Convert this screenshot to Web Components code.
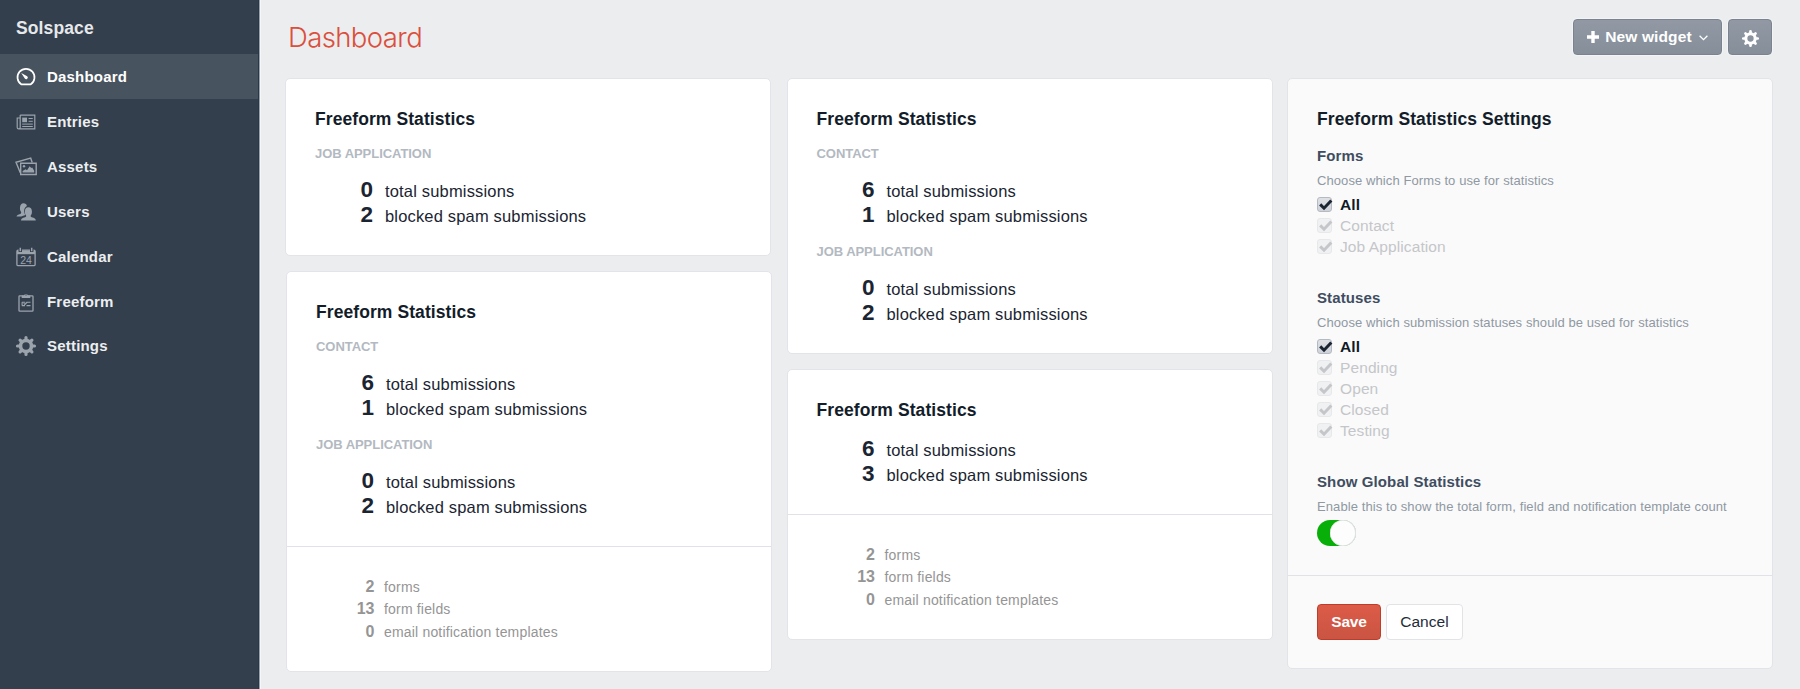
<!DOCTYPE html>
<html lang="en">
<head>
<meta charset="utf-8">
<title>Dashboard</title>
<style>
  html, body { margin: 0; height: 100%; }
  body { background: #ebedef; font-family: "Liberation Sans", Arial, sans-serif; color: #1b2532; overflow: hidden; }
</style>
</head>
<body>
<cp-app></cp-app>
<script>
const define = (name, html, after) => {
  const tpl = document.createElement('template');
  tpl.innerHTML = html;
  customElements.define(name, class extends HTMLElement {
    constructor() {
      super();
      this.attachShadow({ mode: 'open' }).append(tpl.content.cloneNode(true));
    }
    connectedCallback() { if (after) after(this, this.shadowRoot); }
  });
};

const GEAR = '<g fill="none" stroke="currentColor"><circle cx="10" cy="10" r="5.500" stroke-width="3.600"/><path d="M10 1.500v2.500M10 16v2.500M1.500 10H4M16 10h2.500M4.100 4.100l1.500 1.500M14.400 14.400l1.500 1.500M4.100 15.900l1.500-1.500M14.400 5.600l1.500-1.500" stroke-width="3.200" stroke-linecap="round"/></g>';

const ICONS = {
  gauge: '<path d="M5.200 17.300A8.500 8.500 0 1 1 14.800 17.300Z" fill="none" stroke="currentColor" stroke-width="1.700" stroke-linejoin="round"/><path d="M5.200 5.900l6 3.300a1.700 1.700 0 1 1-2.400 2.400z" fill="currentColor"/>',
  news: '<g fill="none" stroke="currentColor" stroke-width="1.200"><path d="M4.200 3.100h14.600v13.800H2.700a1.500 1.500 0 0 1-1.500-1.500V6h3M4.200 3.100v12.300a1.400 1.400 0 0 1-1.400 1.400"/><path d="M12.600 6.500h4.200M12.600 9.300h4.200M6.200 12.100h10.600M6.200 14.500h10.600" stroke-width="1"/></g><path d="M6.200 5.600h4.800v4.600H6.200z" fill="currentColor"/>',
  photos: '<g fill="none" stroke="currentColor" stroke-width="1.400"><path d="M4.700 6.300h15.500v11.200H4.700z"/><path d="M4.300 15.800L0 5.300 14.700 1.200l1.500 4.200"/></g><circle cx="8" cy="9.300" r="1.200" fill="currentColor"/><path d="M6.600 15.600v-1.500l3-1.800 1.400 1 2.700-4 1.500 1.800 1-.5 2 3.200v1.800z" fill="currentColor"/>',
  users: '<path d="M.5 14.600c.2-1.700 1.600-2.100 3.700-2.700 1.100-.4 1.200-1.500.6-2.500-.8-1.100-.9-2.200-.8-3.900C4.100 2.800 5.400 1.200 7.500 1.200c1.900 0 3.100.9 3.400 2.700-1.900 1-2.900 2.900-2.700 5.500.1 1.300.4 2.400 1.100 3.500-1.300.8-3 .9-4.200 1.700z" fill="currentColor"/><path d="M5 18.600c.1-1.900 1.200-2.500 4.100-3.300 1.300-.4 1.300-1.300.7-2.200-.7-1-1-2-.9-3.900.1-2.500 1.300-4 3.500-4s3.400 1.500 3.500 4c.1 1.900-.2 2.900-.9 3.900-.6.900-.6 1.800.7 2.200 2.900.8 4 1.400 4.100 3.300z" fill="currentColor"/>',
  calendar: '<rect x=".9" y="3.200" width="18.200" height="15.400" rx="1.200" fill="none" stroke="currentColor" stroke-width="1.300"/><path d="M1 3.500h18v3.700H1z" fill="currentColor"/><path d="M4.300.9v4M15.700.9v4" stroke="#333f4d" stroke-width="3.400"/><path d="M4.300.8v3.400M15.700.8v3.400" stroke="currentColor" stroke-width="1.500"/><text x="10.100" y="16.700" font-size="10.500" text-anchor="middle" font-family="Liberation Sans" fill="currentColor">24</text>',
  clipboard: '<rect x="3" y="3.800" width="14" height="15.400" rx=".8" fill="none" stroke="currentColor" stroke-width="1.300"/><path d="M5.700 6V3.500h2.200a2.200 2.200 0 0 1 4.200 0h2.200V6z" fill="currentColor"/><circle cx="10" cy="2.900" r=".7" fill="#333f4d"/><path d="M5.800 10.200h3.400M11.300 10.200h3.200M5.800 13.600h3.200M10.500 13.600h4M6.100 10.200v3.400M7.700 11.400l1.200 1.100 2.400-2.500" stroke="currentColor" stroke-width="1.100" fill="none"/>',
  gear: GEAR
};

define('cp-icon', `
  <style>:host{display:block;width:var(--size,20px);height:var(--size,20px);flex:none} svg{display:block;width:100%;height:100%;overflow:visible}</style>
  <svg viewBox="0 0 20 20"></svg>`,
  (el, root) => { root.querySelector('svg').innerHTML = ICONS[el.getAttribute('name')]; });

define('nav-item', `
  <style>
    :host{display:flex;align-items:center;height:44.850px;padding:2px 0 0 16px;gap:11px;color:#9ba3ad;box-sizing:border-box}
    :host([active]){background:#47535f;color:#fff}
    span{font:bold 15px/20px "Liberation Sans",Arial,sans-serif;color:#eceef0;letter-spacing:.2px}
    :host([active]) span{color:#fff}
  </style>
  <cp-icon></cp-icon><span><slot></slot></span>`,
  (el, root) => {
    const old = root.querySelector('cp-icon');
    const icon = document.createElement('cp-icon');
    icon.setAttribute('name', el.getAttribute('icon'));
    old.replaceWith(icon);
  });

define('side-bar', `
  <style>
    :host{display:block;width:259px;margin-right:1px;flex:none;background:#333f4d;border-right:1px solid #29374a;box-sizing:border-box;box-shadow:1px 0 0 #9aa2ac,2px 0 0 #f6f7f8}
    h1{margin:0;height:54px;box-sizing:border-box;padding:16px 0 0 16px;font:bold 17.500px/24px "Liberation Sans",Arial,sans-serif;letter-spacing:.12px;color:#e6e8ea}
  </style>
  <h1>Solspace</h1>
  <nav>
    <nav-item icon="gauge" active>Dashboard</nav-item>
    <nav-item icon="news">Entries</nav-item>
    <nav-item icon="photos">Assets</nav-item>
    <nav-item icon="users">Users</nav-item>
    <nav-item icon="calendar">Calendar</nav-item>
    <nav-item icon="clipboard">Freeform</nav-item>
    <nav-item icon="gear">Settings</nav-item>
  </nav>`);

define('cp-button', `
  <style>
    :host{display:flex;align-items:center;justify-content:center;box-sizing:border-box;height:36px;border-radius:4px;border:1px solid #e1e3e6;background:#fff;font-size:15.500px;line-height:20px;color:#222c39}
    :host([kind=dark]){background:linear-gradient(#9299a4,#858e99);border-color:#7a838f;color:#fff;font-weight:bold;box-shadow:0 0 0 1px #f3f4f5}
    :host([kind=primary]){background:linear-gradient(#dc5b48,#c95542);border-color:#bf3c2b;color:#fff;font-weight:bold}
  </style><slot></slot>`);

define('page-header', `
  <style>
    :host{display:flex;justify-content:space-between;height:78px;box-sizing:border-box;padding:19px 28px 0 28px}
    h2{margin:0;font:300 27.500px/36px Inter,"Liberation Sans",sans-serif;letter-spacing:-.6px;color:#db4f3c}
    div{display:flex;gap:6px}
    .new{width:149px;letter-spacing:.12px}
    .cog{width:44px}
    .cog cp-icon{--size:17px;margin-top:2px}
    .plus{width:12px;height:12px;margin-right:6px}
    .arrow{width:9px;height:6px;margin:2px 0 0 7px}
  </style>
  <h2>Dashboard</h2>
  <div>
    <cp-button kind="dark" class="new"><svg class="plus" viewBox="0 0 12 12"><path d="M6 0v12M0 6h12" stroke="#fff" stroke-width="3.400"/></svg>New widget<svg class="arrow" viewBox="0 0 9 6"><path d="M.6.8l3.900 3.900L8.400.8" fill="none" stroke="#fff" stroke-width="1.300"/></svg></cp-button>
    <cp-button kind="dark" class="cog"><cp-icon name="gear"></cp-icon></cp-button>
  </div>`);

define('widget-card', `
  <style>
    :host{display:block;box-sizing:border-box;width:486px;border:1px solid #e2e4e9;border-radius:5px;background:var(--card-bg,#fff)}
    .body{padding:28px 28px 28px 29px}
    h3{margin:0 0 1px;font:bold 17.500px/24px "Liberation Sans",Arial,sans-serif;letter-spacing:.08px;color:#131d2a}
    .foot{border-top:1px solid #e0e2e8;padding:var(--foot-pad,29px 28px 28px 29px)}
    :host(:not([footer])) .foot{display:none}
  </style>
  <div class="body"><h3></h3><slot></slot></div>
  <div class="foot"><slot name="footer"></slot></div>`,
  (el, root) => { root.querySelector('h3').textContent = el.getAttribute('heading'); });

define('stat-group', `
  <style>
    :host{display:block;padding-top:12px}
    h4{margin:0 0 13px;font:bold 13px/20px "Liberation Sans",Arial,sans-serif;letter-spacing:-.05px;color:#b3b9c1}
  </style>
  <h4></h4><slot></slot>`,
  (el, root) => { root.querySelector('h4').textContent = el.getAttribute('name'); });

define('stat-row', `
  <style>
    :host{display:grid;grid-template-columns:58px 1fr;column-gap:12px;align-items:baseline;height:25px;line-height:25px;color:#1b2532}
    b{font-size:22.500px;text-align:right}
    span{font-size:16.500px;letter-spacing:.17px}
    :host([small]){grid-template-columns:58.500px 1fr;height:22.400px;line-height:22.400px;color:#959595;column-gap:9.500px}
    :host([small]) b{font-size:16px}
    :host([small]) span{font-size:14px;letter-spacing:.18px}
  </style><b></b><span><slot></slot></span>`,
  (el, root) => { root.querySelector('b').textContent = el.getAttribute('value'); });

define('check-row', `
  <style>
    :host{display:flex;align-items:center;gap:8px;height:21.200px;font-size:15.500px;line-height:21px;letter-spacing:.1px;color:#1b2532}
    .box{width:15px;height:15px;box-sizing:border-box;border:1px solid #b4b9c2;border-radius:3px;background:linear-gradient(#dfe1e5,#ced2d9);flex:none}
    svg{display:block;width:15px;height:13px;overflow:visible}
    :host([all]) span{font-weight:bold;color:#111b28}
    :host(:not([all])){color:#c4c6c9}
    :host(:not([all])) .box{border-color:#e7e8ea;background:#f0f1f2}
  </style>
  <div class="box"><svg viewBox="0 0 15 13"><path d="M2.200 6.400l3.800 3.800 7.300-7.700" fill="none" stroke="currentColor" stroke-width="3"/></svg></div><span><slot></slot></span>`);

define('setting-field', `
  <style>
    :host{display:block}
    h4{margin:0;font:bold 15px/20px "Liberation Sans",Arial,sans-serif;letter-spacing:.12px;color:#3f4d61}
    p{margin:6px 0 4px;font-size:13px;line-height:18px;letter-spacing:.09px;color:#8f98a3}
  </style>
  <h4></h4><p></p><slot></slot>`,
  (el, root) => {
    root.querySelector('h4').textContent = el.getAttribute('label');
    root.querySelector('p').textContent = el.getAttribute('hint');
  });

define('toggle-switch', `
  <style>
    :host{display:flex;justify-content:flex-end;width:39px;height:26px;margin-bottom:1px;box-sizing:border-box;border-radius:13px;background:#09af09}
    i{width:26px;height:26px;border-radius:50%;background:#fdfdfd;box-sizing:border-box;box-shadow:inset -1px 0 0 #dfe0e2,inset 0 0 0 .5px #d9dbdd}
  </style><i></i>`);

define('settings-panel', `
  <style>
    :host{display:block}
    widget-card{--card-bg:#fafafa;--foot-pad:28px 28px 28px 29px}
    .a{padding-top:14px}
    .b{padding-top:30px}
    .actions{display:flex;gap:5px}
    .save{width:64px;letter-spacing:-.2px}
    .cancel{width:77px;letter-spacing:.06px}
  </style>
  <widget-card heading="Freeform Statistics Settings" footer>
    <setting-field class="a" label="Forms" hint="Choose which Forms to use for statistics">
      <check-row all>All</check-row><check-row>Contact</check-row><check-row>Job Application</check-row>
    </setting-field>
    <setting-field class="b" label="Statuses" hint="Choose which submission statuses should be used for statistics">
      <check-row all>All</check-row><check-row>Pending</check-row><check-row>Open</check-row><check-row>Closed</check-row><check-row>Testing</check-row>
    </setting-field>
    <setting-field class="b" label="Show Global Statistics" hint="Enable this to show the total form, field and notification template count">
      <toggle-switch></toggle-switch>
    </setting-field>
    <div class="actions" slot="footer">
      <cp-button kind="primary" class="save">Save</cp-button>
      <cp-button class="cancel">Cancel</cp-button>
    </div>
  </widget-card>`);

const rows = (a, b) => `<stat-row value="${a}">total submissions</stat-row><stat-row value="${b}">blocked spam submissions</stat-row>`;
const contact = `<stat-group name="CONTACT">${rows(6, 1)}</stat-group>`;
const job = `<stat-group name="JOB APPLICATION">${rows(0, 2)}</stat-group>`;
const totals = `<div slot="footer"><stat-row small value="2">forms</stat-row><stat-row small value="13">form fields</stat-row><stat-row small value="0">email notification templates</stat-row></div>`;

define('cp-app', `
  <style>
    :host{display:flex;height:100%}
    main{flex:1;min-width:0}
    .grid{display:grid;grid-template-columns:486px 486px 486px;column-gap:15.500px;padding-left:25px;align-items:start}
    .col{display:flex;flex-direction:column;gap:15px}
    .shift{margin-left:1px}
    stat-group + stat-group{padding-top:15px}
    .overall{padding-top:13px}
    settings-panel{margin-left:-1px}
  </style>
  <side-bar></side-bar>
  <main>
    <page-header></page-header>
    <div class="grid">
      <div class="col">
        <widget-card heading="Freeform Statistics">${job}</widget-card>
        <widget-card class="shift" heading="Freeform Statistics" footer>${contact}${job}${totals}</widget-card>
      </div>
      <div class="col">
        <widget-card heading="Freeform Statistics">${contact}${job}</widget-card>
        <widget-card heading="Freeform Statistics" footer><div class="overall">${rows(6, 3)}</div>${totals}</widget-card>
      </div>
      <settings-panel></settings-panel>
    </div>
  </main>`);
</script>
</body>
</html>
